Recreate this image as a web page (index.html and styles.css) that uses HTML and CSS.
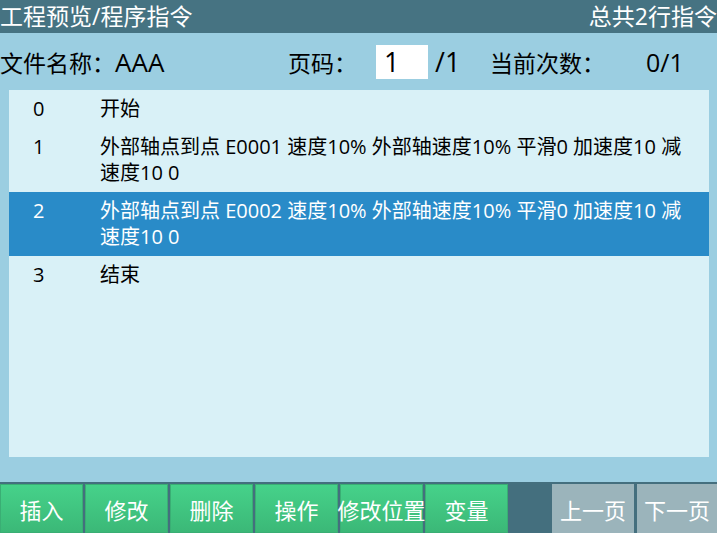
FILE: index.html
```html
<!DOCTYPE html>
<html lang="zh-CN">
<head>
<meta charset="utf-8">
<title>工程预览/程序指令</title>
<link rel="stylesheet" href="styles.css">
</head>
<body>
<div class="app">
  <header class="titlebar">
    <span class="title">工程预览/程序指令</span>
    <span class="total">总共2行指令</span>
  </header>
  <div class="info">
    <span class="filename">文件名称：<span class="latin">AAA</span></span>
    <span class="page-label">页码：</span>
    <span class="page-box">1</span>
    <span class="page-total">/1</span>
    <span class="count-label">当前次数：</span>
    <span class="count">0/1</span>
  </div>
  <div class="panel">
    <div class="row"><span class="num">0</span><span class="text">开始</span></div>
    <div class="row"><span class="num">1</span><span class="text">外部轴点到点 E0001 速度10% 外部轴速度10% 平滑0 加速度10 减速度10 0</span></div>
    <div class="row selected"><span class="num">2</span><span class="text">外部轴点到点 E0002 速度10% 外部轴速度10% 平滑0 加速度10 减速度10 0</span></div>
    <div class="row"><span class="num">3</span><span class="text">结束</span></div>
  </div>
  <footer class="toolbar">
    <div class="btn green">插入</div>
    <div class="btn green">修改</div>
    <div class="btn green">删除</div>
    <div class="btn green">操作</div>
    <div class="btn green wide-text">修改位置</div>
    <div class="btn green">变量</div>
    <div class="pager">
      <div class="btn gray prev">上一页</div>
      <div class="btn gray next">下一页</div>
    </div>
  </footer>
</div>
</body>
</html>
```
FILE: styles.css
```css
html, body {
  margin: 0;
  padding: 0;
}
body {
  width: 717px;
  height: 533px;
  overflow: hidden;
  background: #9bcee1;
  font-family: "Open Sans", "Noto Sans CJK SC", sans-serif;
}
.app {
  display: flex;
  flex-direction: column;
  width: 717px;
  height: 533px;
}
.titlebar {
  height: 33px;
  flex: none;
  background: #467382;
  color: #ffffff;
  font-size: 23px;
  line-height: 33px;
  display: flex;
  justify-content: space-between;
  white-space: nowrap;
}
.info {
  height: 57px;
  flex: none;
  display: flex;
  align-items: center;
  font-size: 23px;
  color: #000;
  white-space: nowrap;
}
.latin { font-size: 26px; }
.filename { width: 288px; }
.page-label { width: 88px; }
.page-box {
  width: 52px;
  height: 34px;
  line-height: 34px;
  background: #ffffff;
  box-sizing: border-box;
  padding-left: 8px;
  font-size: 27px;
}
.page-total {
  width: 55px;
  margin-left: 7px;
  font-size: 27px;
}
.count-label { width: 156px; }
.count { font-size: 25px; }

.panel {
  margin: 0 8px 0 9px;
  height: 367px;
  flex: none;
  background: #d9f1f7;
  font-size: 20px;
  color: #000;
}
.row {
  display: flex;
  padding: 6px 0;
  line-height: 26px;
}
.row.selected {
  background: #298bc8;
  color: #ffffff;
}
.num {
  width: 67px;
  padding-left: 24px;
  flex: none;
}
.text {
  flex: 1;
  padding-right: 8px;
}

.toolbar {
  margin-top: auto;
  height: 51px;
  flex: none;
  box-sizing: border-box;
  padding-top: 2px;
  background: #446f7e;
  display: flex;
  gap: 2px;
}
.btn {
  height: 49px;
  box-sizing: border-box;
  display: flex;
  align-items: center;
  justify-content: center;
  color: #ffffff;
  font-size: 22px;
  white-space: nowrap;
  overflow: hidden;
}
.btn.wide-text {
  overflow: visible;
}
.btn.green {
  width: 83px;
  background: linear-gradient(#46d28a, #3bb877);
  border: 1px solid #3aae74;
}
.pager {
  margin-left: auto;
  display: flex;
  gap: 3px;
}
.btn.gray {
  background: #9bb4bb;
}
.btn.prev { width: 82px; }
.btn.next { width: 80px; }
```
